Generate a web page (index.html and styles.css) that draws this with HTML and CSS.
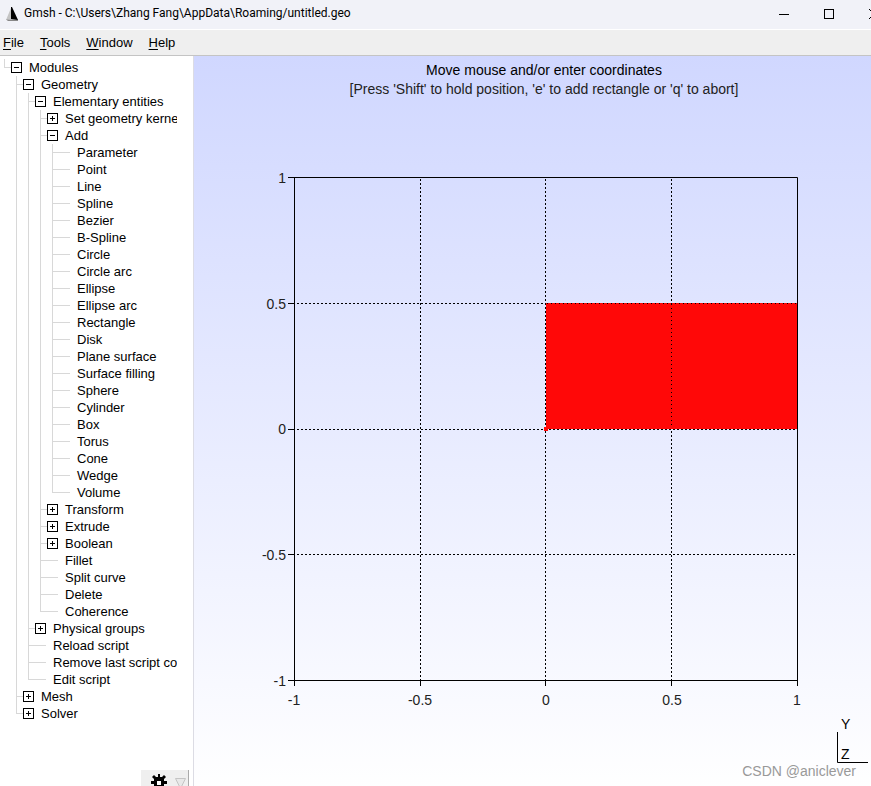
FILE: index.html
```html
<!DOCTYPE html>
<html lang="en">
<head>
<meta charset="utf-8">
<title>Gmsh</title>
<link rel="stylesheet" href="styles.css">
</head>
<body>
<div class="app">
  <header class="titlebar">
    <svg class="logo" width="14" height="14" viewBox="0 0 14 14" aria-hidden="true"><path d="M5 1 5 12 0 13Z" fill="#c4c4c4"/><path d="M0 12.500H12V14H2Z" fill="#888"/><path d="M5 0H6L12 13 5 12Z" fill="#000"/></svg>
    <h1 class="title">Gmsh - C:\Users\Zhang Fang\AppData\Roaming/untitled.geo</h1>
    <div class="window-buttons">
      <button aria-label="Minimize"><svg width="10" height="10"><path d="M0 5.500H10" stroke="#000"/></svg></button>
      <button aria-label="Maximize"><svg width="10" height="10"><rect x=".5" y=".5" width="9" height="9" fill="none" stroke="#000"/></svg></button>
      <button aria-label="Close"><svg width="10" height="10"><path d="M0 0 10 10M10 0 0 10" stroke="#000"/></svg></button>
    </div>
  </header>
  <nav class="menubar">
    <button><u>F</u>ile</button>
    <button><u>T</u>ools</button>
    <button><u>W</u>indow</button>
    <button><u>H</u>elp</button>
  </nav>
  <div class="workspace">
    <aside class="sidebar">
      <ul class="tree">
        <li class="root"><div class="row"><button class="toggle open" aria-label="Collapse"></button><a href="#">Modules</a></div>
          <ul>
            <li><div class="row"><button class="toggle open" aria-label="Collapse"></button><a href="#">Geometry</a></div>
              <ul>
                <li><div class="row"><button class="toggle open" aria-label="Collapse"></button><a href="#">Elementary entities</a></div>
                  <ul>
                    <li><div class="row"><button class="toggle" aria-label="Expand"></button><a href="#">Set geometry kernel</a></div></li>
                    <li><div class="row"><button class="toggle open" aria-label="Collapse"></button><a href="#">Add</a></div>
                      <ul>
                        <li><div class="row leaf"><a href="#">Parameter</a></div></li>
                        <li><div class="row leaf"><a href="#">Point</a></div></li>
                        <li><div class="row leaf"><a href="#">Line</a></div></li>
                        <li><div class="row leaf"><a href="#">Spline</a></div></li>
                        <li><div class="row leaf"><a href="#">Bezier</a></div></li>
                        <li><div class="row leaf"><a href="#">B-Spline</a></div></li>
                        <li><div class="row leaf"><a href="#">Circle</a></div></li>
                        <li><div class="row leaf"><a href="#">Circle arc</a></div></li>
                        <li><div class="row leaf"><a href="#">Ellipse</a></div></li>
                        <li><div class="row leaf"><a href="#">Ellipse arc</a></div></li>
                        <li><div class="row leaf"><a href="#">Rectangle</a></div></li>
                        <li><div class="row leaf"><a href="#">Disk</a></div></li>
                        <li><div class="row leaf"><a href="#">Plane surface</a></div></li>
                        <li><div class="row leaf"><a href="#">Surface filling</a></div></li>
                        <li><div class="row leaf"><a href="#">Sphere</a></div></li>
                        <li><div class="row leaf"><a href="#">Cylinder</a></div></li>
                        <li><div class="row leaf"><a href="#">Box</a></div></li>
                        <li><div class="row leaf"><a href="#">Torus</a></div></li>
                        <li><div class="row leaf"><a href="#">Cone</a></div></li>
                        <li><div class="row leaf"><a href="#">Wedge</a></div></li>
                        <li><div class="row leaf"><a href="#">Volume</a></div></li>
                      </ul>
                    </li>
                    <li><div class="row"><button class="toggle" aria-label="Expand"></button><a href="#">Transform</a></div></li>
                    <li><div class="row"><button class="toggle" aria-label="Expand"></button><a href="#">Extrude</a></div></li>
                    <li><div class="row"><button class="toggle" aria-label="Expand"></button><a href="#">Boolean</a></div></li>
                    <li><div class="row leaf"><a href="#">Fillet</a></div></li>
                    <li><div class="row leaf"><a href="#">Split curve</a></div></li>
                    <li><div class="row leaf"><a href="#">Delete</a></div></li>
                    <li><div class="row leaf"><a href="#">Coherence</a></div></li>
                  </ul>
                </li>
                <li><div class="row"><button class="toggle" aria-label="Expand"></button><a href="#">Physical groups</a></div></li>
                <li><div class="row leaf"><a href="#">Reload script</a></div></li>
                <li><div class="row leaf"><a href="#">Remove last script command</a></div></li>
                <li><div class="row leaf"><a href="#">Edit script</a></div></li>
              </ul>
            </li>
            <li><div class="row"><button class="toggle" aria-label="Expand"></button><a href="#">Mesh</a></div></li>
            <li><div class="row"><button class="toggle" aria-label="Expand"></button><a href="#">Solver</a></div></li>
          </ul>
        </li>
      </ul>
      <button class="options" aria-label="Options">
        <svg width="47" height="25" viewBox="0 0 47 25"><path d="M17 4h2v3h2l2-2 2 2-2 2v2h3v3h-3v2l2 2-2 2-2-2h-2v3h-2v-3h-2l-2 2-2-2 2-2v-2h-3v-3h3V9l-2-2 2-2 2 2h2Z" fill="#000"/><rect x="16" y="11" width="4" height="4" fill="#fff"/><path d="M34.500 8.500H44.500L39.500 18.500Z" fill="#e8e8e8" stroke="#c4c4c4"/></svg>
      </button>
    </aside>
    <main class="canvas">
      <p class="message">Move mouse and/or enter coordinates</p>
      <p class="message hint">[Press 'Shift' to hold position, 'e' to add rectangle or 'q' to abort]</p>
      <svg class="plot" width="600" height="570" viewBox="0 0 600 570">
        <rect x="302" y="145" width="251" height="126" fill="#ff0808"/>
        <g class="grid">
          <path d="M176.500 21V522M301.500 21V522M427.500 21V145M427.500 273V522M53 145.500H302M53 271.500H553M53 396.500H553"/>
          <path class="dots" d="M427.500 146V270M303 145.500H553"/>
        </g>
        <path class="axes" d="M44 19.500H553.500V528M50.500 19V528M44 522.500H553M44 145.500H50M44 271.500H50M44 396.500H50M176.500 522V528M301.500 522V528M427.500 522V528"/>
        <rect x="300" y="269" width="4" height="4" fill="#ff0808"/>
        <g class="labels y">
          <text x="42" y="25">1</text><text x="42" y="151">0.5</text><text x="42" y="276">0</text><text x="42" y="402">-0.5</text><text x="42" y="528">-1</text>
        </g>
        <g class="labels x">
          <text x="50" y="547">-1</text><text x="176" y="547">-0.5</text><text x="302" y="547">0</text><text x="428" y="547">0.5</text><text x="553" y="547">1</text>
        </g>
      </svg>
      <svg class="triad" width="34" height="50" viewBox="0 0 34 50">
        <path d="M.5 16V46.500H31" fill="none" stroke="#000"/>
        <text x="4" y="13">Y</text><text x="4" y="43">Z</text>
      </svg>
      <span class="watermark">CSDN @aniclever</span>
    </main>
  </div>
</div>
</body>
</html>
```
FILE: styles.css
```css
* { box-sizing: border-box; }
body { margin: 0; height: 100vh; overflow: hidden; font-family: "Liberation Sans", Arial, sans-serif; font-size: 13px; color: #000; }
button { margin: 0; padding: 0; border: 0; background: none; font: inherit; color: inherit; }
p, h1 { margin: 0; font-weight: 400; }
ul { margin: 0; padding: 0; list-style: none; }

/* The window runs slightly past the right and bottom screen edges. */
.app { display: flex; flex-direction: column; width: calc(100% + 23px); height: calc(100vh + 9px); }

.titlebar { display: flex; align-items: center; height: 30px; padding: 0 0 2px 6px; background: #f1f2f8; border-bottom: 1px solid #fff; }
.logo { margin-right: 4px; }
.title { flex: 1; font-family: Roboto, sans-serif; font-size: 12px; line-height: 27px; white-space: nowrap; }
.window-buttons { display: flex; margin-right: -2px; }
.window-buttons button { display: flex; align-items: center; justify-content: center; width: 45px; height: 26px; }

.menubar { display: flex; gap: 16px; height: 26px; padding-left: 3px; background: #efefef; border-bottom: 1px solid #c4c4c4; line-height: 24px; }
.menubar u { text-underline-offset: 2px; }

.workspace { display: flex; flex: 1; min-height: 0; }
.sidebar { display: flex; flex-direction: column; justify-content: space-between; width: 194px; flex: none; padding-top: 3px; border-right: 1px solid #dcdce4; background: #fff; }
.tree { width: 177px; padding-left: 4px; overflow: hidden; }
.tree ul { padding-left: 12px; }
.tree li { position: relative; }
.tree li::before { content: ""; position: absolute; left: 0; top: 0; bottom: 0; border-left: 1px solid #d8d8d8; }
.tree li:last-child::before { bottom: auto; height: 9px; }
.row { display: flex; align-items: center; height: 17px; white-space: nowrap; }
.row::before { content: ""; flex: none; width: 7px; border-top: 1px solid #d8d8d8; }
.row.leaf::before { width: 18px; }
.row a { margin-left: 7px; color: inherit; text-decoration: none; line-height: 17px; }
.toggle { position: relative; flex: none; width: 11px; height: 11px; border: 1px solid #000; background: linear-gradient(#000, #000) center / 5px 1px no-repeat, linear-gradient(#000, #000) center / 1px 5px no-repeat, #fff; }
.toggle.open { background: linear-gradient(#000, #000) center / 5px 1px no-repeat, #fff; }
.options { align-self: flex-end; width: 48px; height: 25px; margin-right: 4px; background: #efefef; border-right: 1px solid #aaa; }

.canvas { position: relative; display: flex; flex: 1; flex-direction: column; align-items: center; min-width: 0; padding-top: 5px; background: linear-gradient(#d0d7ff, #fff); }
.message { font-size: 14px; line-height: 19px; white-space: nowrap; }
.hint { color: #222; }
.plot { flex: none; margin-top: 59px; }
.grid { fill: none; stroke: #000; stroke-dasharray: 2 2; }
.dots { stroke-dasharray: 1 3; }
.axes { fill: none; stroke: #000; }
.labels { font-size: 14px; fill: #222; }
.labels.y { text-anchor: end; }
.labels.x { text-anchor: middle; }
.triad { position: absolute; right: 23px; bottom: 29px; font-size: 14px; }
.watermark { position: absolute; right: 38px; bottom: 15px; color: #999; font-size: 14px; line-height: 18px; }
```
